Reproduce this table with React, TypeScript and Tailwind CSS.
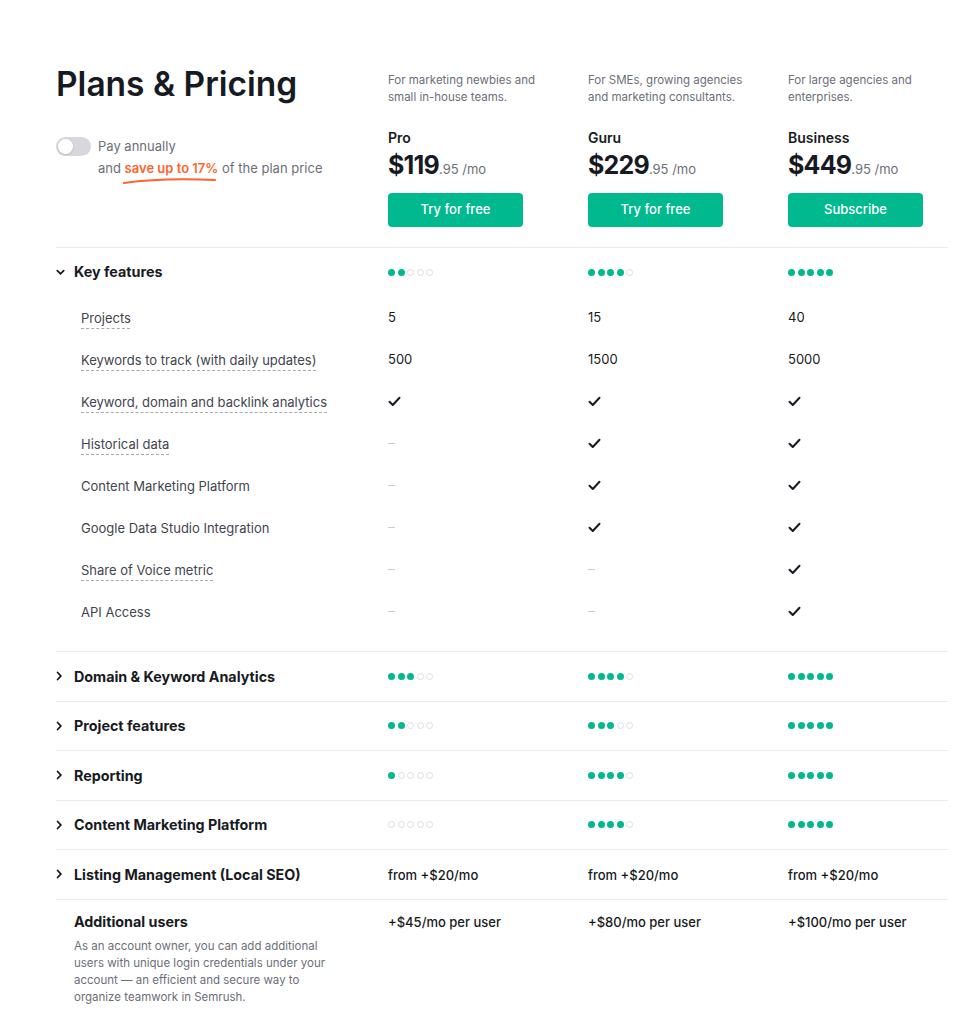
import type { ReactNode } from 'react'

type Cell = string | boolean

interface Feature {
  label: string
  dashed: boolean
  values: Cell[]
}

const plans = [
  { name: 'Pro', desc: ['For marketing newbies and', 'small in-house teams.'], price: '$119', cta: 'Try for free' },
  { name: 'Guru', desc: ['For SMEs, growing agencies', 'and marketing consultants.'], price: '$229', cta: 'Try for free' },
  { name: 'Business', desc: ['For large agencies and', 'enterprises.'], price: '$449', cta: 'Subscribe' },
]

const keyFeatures: Feature[] = [
  { label: 'Projects', dashed: true, values: ['5', '15', '40'] },
  { label: 'Keywords to track (with daily updates)', dashed: true, values: ['500', '1500', '5000'] },
  { label: 'Keyword, domain and backlink analytics', dashed: true, values: [true, true, true] },
  { label: 'Historical data', dashed: true, values: [false, true, true] },
  { label: 'Content Marketing Platform', dashed: false, values: [false, true, true] },
  { label: 'Google Data Studio Integration', dashed: false, values: [false, true, true] },
  { label: 'Share of Voice metric', dashed: true, values: [false, false, true] },
  { label: 'API Access', dashed: false, values: [false, false, true] },
]

const sections: { title: string; cells: (number | string)[] }[] = [
  { title: 'Domain & Keyword Analytics', cells: [3, 4, 5] },
  { title: 'Project features', cells: [2, 3, 5] },
  { title: 'Reporting', cells: [1, 4, 5] },
  { title: 'Content Marketing Platform', cells: [0, 4, 5] },
  { title: 'Listing Management (Local SEO)', cells: ['from +$20/mo', 'from +$20/mo', 'from +$20/mo'] },
]

const grid = 'grid grid-cols-[332px_200px_200px_160px]'

function Dots({ filled }: { filled: number }) {
  return (
    <div className="flex items-center gap-[2.5px]">
      {[0, 1, 2, 3, 4].map((i) => (
        <span
          key={i}
          className={
            i < filled
              ? 'h-[7px] w-[7px] rounded-full bg-[#00b98f]'
              : 'h-[7px] w-[7px] rounded-full border border-[#dcdee4] bg-white'
          }
        />
      ))}
    </div>
  )
}

function Check() {
  return (
    <svg width="13" height="11" viewBox="0 0 13 11" fill="none">
      <path d="M1.5 5.8 L4.8 9 L11.5 1.8" stroke="#171a22" strokeWidth="2" strokeLinecap="round" strokeLinejoin="round" />
    </svg>
  )
}

function Dash() {
  return <span className="block h-px w-[7px] bg-[#c9cbd2]" />
}

function Chevron({ open }: { open?: boolean }) {
  return (
    <span className="flex w-[18px] shrink-0 items-center">
      {open ? (
        <svg width="9" height="7" viewBox="0 0 9 7" fill="none">
          <path d="M1.3 1.6 L4.5 4.8 L7.7 1.6" stroke="#171a22" strokeWidth="1.8" strokeLinecap="round" />
        </svg>
      ) : (
        <svg width="7" height="10" viewBox="0 0 7 10" fill="none">
          <path d="M1.6 1.5 L4.8 5 L1.6 8.5" stroke="#171a22" strokeWidth="1.8" strokeLinecap="round" />
        </svg>
      )}
    </span>
  )
}

function Value({ v }: { v: Cell }) {
  if (v === true) return <Check />
  if (v === false) return <Dash />
  return <span className="text-[13px] leading-[20px] text-[#171a22]">{v}</span>
}

function Row({ children, className = '' }: { children: ReactNode; className?: string }) {
  return <div className={`${grid} items-center ${className}`}>{children}</div>
}

export default function App() {
  return (
    <div
      className="min-h-screen bg-white pl-[56px] pr-[31px] pt-[66px] text-[#171a22]"
      style={{ fontFamily: 'Inter, "Noto Sans", sans-serif' }}
    >
      {/* header */}
      <div className={`${grid} border-b border-[#e9eaee] pb-[20px]`}>
        <div>
          <h1 className="text-[33.5px] font-semibold leading-[36px]">Plans &amp; Pricing</h1>
          <div className="mt-[33px] flex gap-[7px]">
            <span className="mt-[2px] flex h-[19px] w-[35px] items-center rounded-full bg-[#d6d8de] px-[2px]">
              <span className="h-[15px] w-[15px] rounded-full bg-white shadow-sm" />
            </span>
            <div className="text-[13px] leading-[22px] text-[#6c6e79]">
              <div>Pay annually</div>
              <div>
                and{' '}
                <span className="relative font-semibold text-[#ff642d]">
                  save up to 17%
                  <svg className="absolute left-[-3px] top-[17px]" width="96" height="8" viewBox="0 0 96 8" fill="none">
                    <path d="M2 6 C 30 2, 60 1.5, 93 3" stroke="#ff642d" strokeWidth="2.2" strokeLinecap="round" />
                  </svg>
                </span>{' '}
                of the plan price
              </div>
            </div>
          </div>
        </div>
        {plans.map((p) => (
          <div key={p.name} className="pt-[6px]">
            <div className="text-[11.5px] leading-[17px] text-[#6c6e79]">
              <div>{p.desc[0]}</div>
              <div>{p.desc[1]}</div>
            </div>
            <div className="mt-[22px] text-[14px] font-semibold leading-[20px]">{p.name}</div>
            <div className="flex items-baseline">
              <span className="text-[25px] font-bold leading-[34px] tracking-[-0.8px]">{p.price}</span>
              <span className="text-[13px] text-[#6c6e79]">.95 /mo</span>
            </div>
            <button
              type="button"
              className="mt-[11px] h-[34px] w-[135px] rounded-[4px] bg-[#00b98f] text-[13px] font-medium text-white"
            >
              {p.cta}
            </button>
          </div>
        ))}
      </div>

      {/* key features */}
      <div className="border-b border-[#e9eaee] pb-[19px]">
        <Row className="h-[48px]">
          <div className="flex items-center">
            <Chevron open />
            <span className="text-[14.3px] font-bold">Key features</span>
          </div>
          <Dots filled={2} />
          <Dots filled={4} />
          <Dots filled={5} />
        </Row>
        {keyFeatures.map((f) => (
          <Row key={f.label} className="h-[42px]">
            <div className="pl-[25px]">
              <span
                className={`text-[13px] leading-[20px] text-[#42444f] ${
                  f.dashed ? 'underline decoration-dashed decoration-[#a6a8b2] decoration-1 underline-offset-[5px]' : ''
                }`}
              >
                {f.label}
              </span>
            </div>
            {f.values.map((v, i) => (
              <div key={i} className="flex items-center">
                <Value v={v} />
              </div>
            ))}
          </Row>
        ))}
      </div>

      {/* collapsed sections */}
      {sections.map((s) => (
        <Row key={s.title} className="h-[49.5px] border-b border-[#e9eaee]">
          <div className="flex items-center">
            <Chevron />
            <span className="text-[14.3px] font-bold">{s.title}</span>
          </div>
          {s.cells.map((c, i) => (
            <div key={i}>
              {typeof c === 'number' ? (
                <Dots filled={c} />
              ) : (
                <span className="text-[13px] font-medium text-[#171a22]">{c}</span>
              )}
            </div>
          ))}
        </Row>
      ))}

      {/* additional users */}
      <div className={`${grid} pt-[12px]`}>
        <div className="pl-[18px]">
          <div className="text-[14.3px] font-bold leading-[20px]">Additional users</div>
          <p className="mt-[6px] w-[255px] text-[11.5px] leading-[17px] text-[#6c6e79]">
            As an account owner, you can add additional users with unique login credentials under your account — an
            efficient and secure way to organize teamwork in Semrush.
          </p>
        </div>
        {['+$45/mo per user', '+$80/mo per user', '+$100/mo per user'].map((t) => (
          <div key={t} className="text-[13px] font-medium leading-[20px]">
            {t}
          </div>
        ))}
      </div>
    </div>
  )
}
